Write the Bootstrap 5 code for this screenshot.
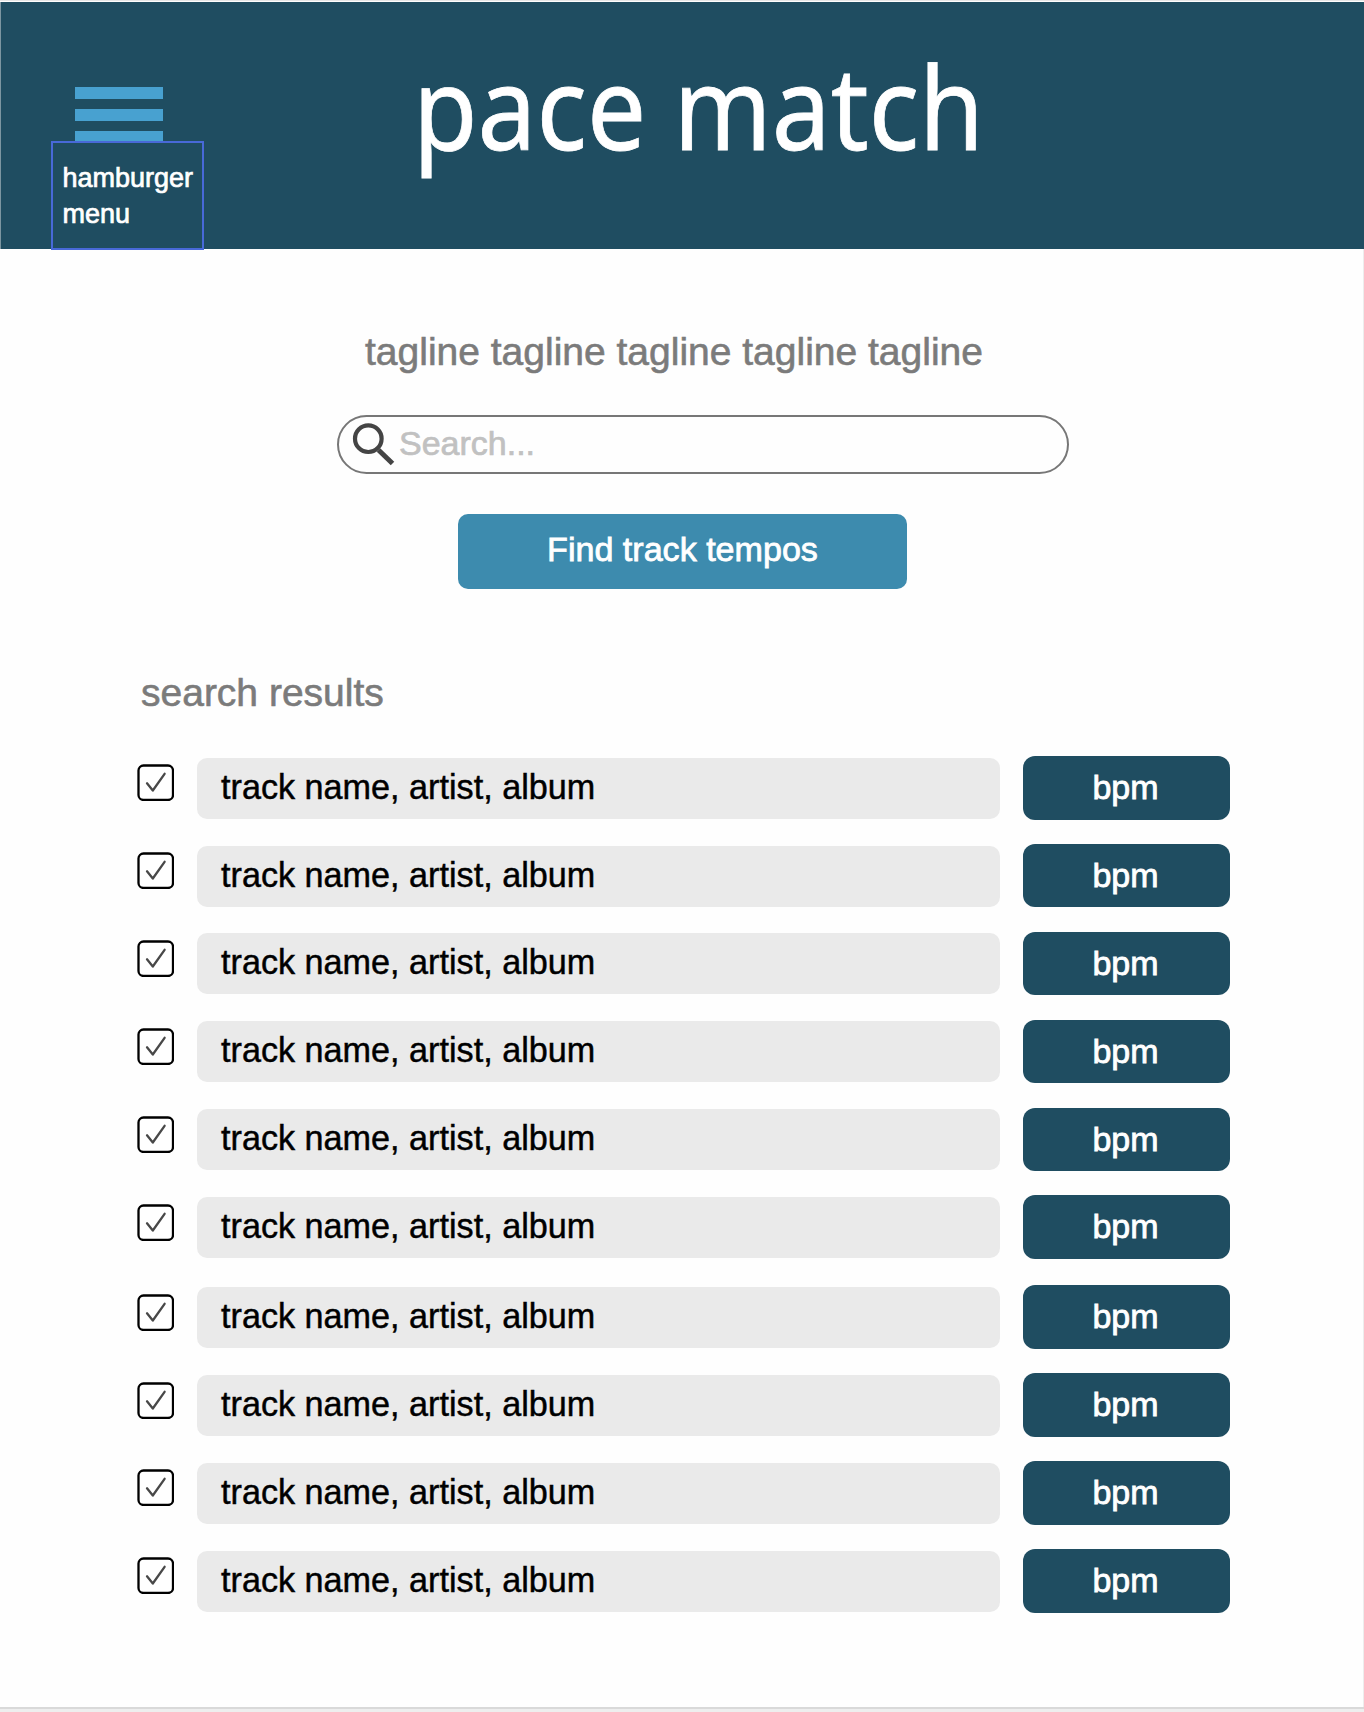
<!DOCTYPE html>
<html lang="en">
<head>
<meta charset="utf-8">
<meta name="viewport" content="width=device-width, initial-scale=1">
<title>pace match</title>
<link href="https://cdn.jsdelivr.net/npm/bootstrap@5.3.0/dist/css/bootstrap.min.css" rel="stylesheet">
<style>
  body { background: #fefefe; font-family: "Liberation Sans", Arial, sans-serif; color: #000; -webkit-text-stroke: .45px currentColor; }
  .page { height: 1712px; border-top: 1px solid #e6e6e6; padding-top: 1px; }
  .page-body { border-right: 1px solid #ededed; height: 1458px; }
  .page-foot { height: 5px; background: #eee; border-top: 2px solid #d9d9d9; }
  .masthead { height: 247px; background: #1f4d61; border-left: 1px solid #7c96a1; }
  .burger { margin: 84.5px 0 0 74px; width: 88px; gap: 9.5px; }
  .burger-line { height: 12.5px; background: #48a1d0; }
  .burger-label { left: 50px; top: 138.5px; width: 153px; height: 109px; border: 2px solid #4869d8; color: #fff; font-size: 27px; line-height: 36px; padding: 17px 0 0 9.5px; -webkit-text-stroke: .7px #fff; }
  .brand { margin-left: 238px; width: 620px; height: 220px; overflow: visible; }
  .brand text { font-family: "Noto Sans", sans-serif; font-size: 115px; fill: #fff; stroke: #fff; stroke-width: .8px; -webkit-text-stroke: .8px #fff; }
  .grey-title { color: #7b7b7b; font-size: 39px; line-height: 46px; -webkit-text-stroke: .6px #7b7b7b; }
  .tagline { padding: 79.5px 0 0 365px; }
  .search-box { margin: 40.5px 0 0 337px; width: 732px; height: 58.5px; border: 2px solid #777; font-size: 34px; line-height: 40px; }
  .search-box svg { margin-left: 12px; }
  .search-box input { color: #c1c1c1; -webkit-text-stroke: .7px #c1c1c1; padding: 0 0 2px; margin-left: 4px; font-size: 34px; height: 44px; }
  .search-box input::placeholder { color: #c1c1c1; opacity: 1; }
  .btn-find { margin: 40px 0 0 458px; width: 449px; height: 75.5px; background: #3d8bae; color: #fff; border: 0; border-radius: 10px; font-size: 34.1px; line-height: 40px; padding: 0 0 4px; -webkit-text-stroke: .8px #fff; }
  .results-title { padding: 81px 0 0 141px; }
  .results { margin: 40px 0 0 136.5px; width: 1093.5px; gap: 24.4px; }
  .result { height: 63.5px; }
  .late { margin-top: 2px; }
  .tick { margin-top: 8.3px; }
  .track { margin: 1.7px 23px 0 23.5px; height: 61px; background: #eaeaea; border-radius: 10px; font-size: 34.2px; line-height: 58px; padding-left: 24px; }
  .bpm { width: 207.5px; background: #1f4d61; color: #fff; border-radius: 12px; font-size: 34px; line-height: 62px; padding-right: 1.5px; -webkit-text-stroke: .8px #fff; }
</style>
<script src="https://cdn.jsdelivr.net/npm/bootstrap@5.3.0/dist/js/bootstrap.bundle.min.js"></script>
</head>
<body>
<svg class="d-none"><symbol id="check" viewBox="0 0 37 37"><rect x="1.5" y="1.5" width="34.5" height="34.5" rx="5" fill="#fff" stroke="#000" stroke-width="2.3"/><path d="M10 19.3 15.8 26.5 27.6 9.8" fill="none" stroke="#484848" stroke-width="2.3" stroke-linecap="round" stroke-linejoin="round"/></symbol></svg>
<div class="page overflow-hidden">
  <header class="masthead position-relative d-flex align-items-start">
    <div class="burger d-flex flex-column flex-shrink-0">
      <div class="burger-line"></div><div class="burger-line"></div><div class="burger-line"></div>
    </div>
    <div class="burger-label position-absolute">hamburger<br>menu</div>
    <svg class="brand flex-shrink-0" viewBox="0 0 620 220" role="img"><text x="12" y="148" textLength="571" lengthAdjust="spacingAndGlyphs">pace match</text></svg>
  </header>
  <main class="page-body">
    <div class="tagline grey-title text-nowrap">tagline tagline tagline tagline tagline</div>
    <div class="search-box rounded-pill d-flex align-items-center">
      <svg class="flex-shrink-0" width="44" height="44" viewBox="0 0 44 44" fill="none" stroke="#444"><circle cx="17.3" cy="16.7" r="13.3" stroke-width="4.2"/><path d="M27.5 28 41.5 41.5" stroke-width="5"/></svg>
      <input type="text" class="form-control border-0 shadow-none bg-transparent" placeholder="Search..." aria-label="Search">
    </div>
    <button type="button" class="btn btn-find d-block">Find track tempos</button>
    <div class="results-title grey-title">search results</div>
    <div class="results d-flex flex-column">
      <div class="result d-flex"><svg class="tick" width="37" height="37"><use href="#check"/></svg><div class="track flex-grow-1">track name, artist, album</div><div class="bpm text-center">bpm</div></div>
      <div class="result d-flex"><svg class="tick" width="37" height="37"><use href="#check"/></svg><div class="track flex-grow-1">track name, artist, album</div><div class="bpm text-center">bpm</div></div>
      <div class="result d-flex"><svg class="tick" width="37" height="37"><use href="#check"/></svg><div class="track flex-grow-1">track name, artist, album</div><div class="bpm text-center">bpm</div></div>
      <div class="result d-flex"><svg class="tick" width="37" height="37"><use href="#check"/></svg><div class="track flex-grow-1">track name, artist, album</div><div class="bpm text-center">bpm</div></div>
      <div class="result d-flex"><svg class="tick" width="37" height="37"><use href="#check"/></svg><div class="track flex-grow-1">track name, artist, album</div><div class="bpm text-center">bpm</div></div>
      <div class="result d-flex"><svg class="tick" width="37" height="37"><use href="#check"/></svg><div class="track flex-grow-1">track name, artist, album</div><div class="bpm text-center">bpm</div></div>
      <div class="result late d-flex"><svg class="tick" width="37" height="37"><use href="#check"/></svg><div class="track flex-grow-1">track name, artist, album</div><div class="bpm text-center">bpm</div></div>
      <div class="result d-flex"><svg class="tick" width="37" height="37"><use href="#check"/></svg><div class="track flex-grow-1">track name, artist, album</div><div class="bpm text-center">bpm</div></div>
      <div class="result d-flex"><svg class="tick" width="37" height="37"><use href="#check"/></svg><div class="track flex-grow-1">track name, artist, album</div><div class="bpm text-center">bpm</div></div>
      <div class="result d-flex"><svg class="tick" width="37" height="37"><use href="#check"/></svg><div class="track flex-grow-1">track name, artist, album</div><div class="bpm text-center">bpm</div></div>
    </div>
  </main>
  <footer class="page-foot"></footer>
</div>
</body>
</html>
